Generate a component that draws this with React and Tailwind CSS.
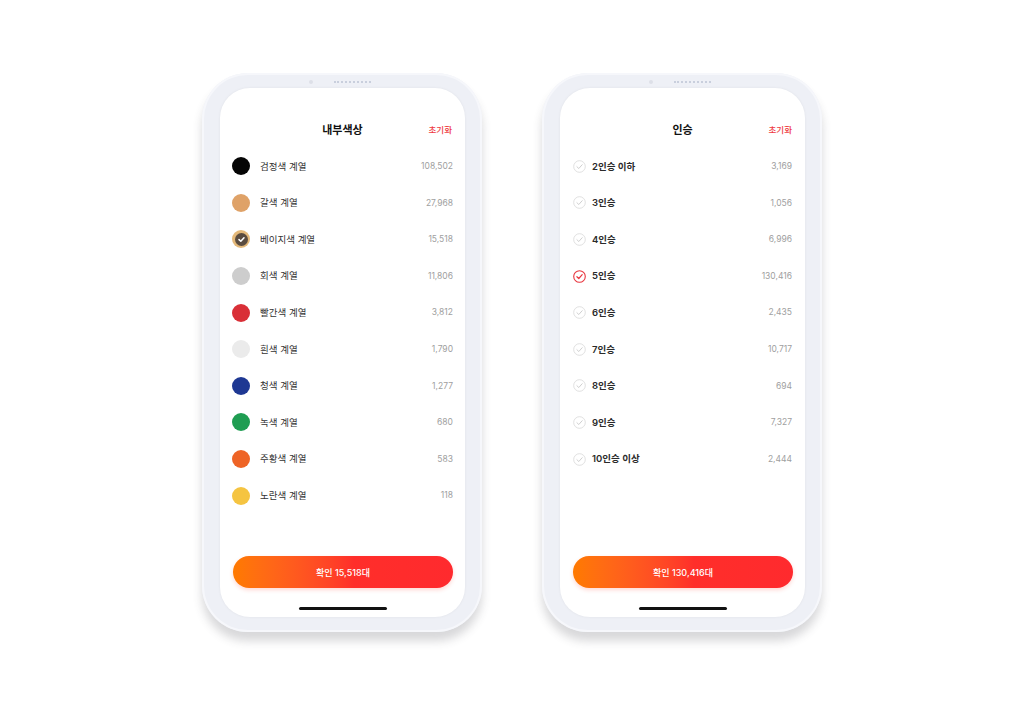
import React from 'react';

const font = { fontFamily: 'Inter, "Noto Sans CJK KR", "Noto Sans", sans-serif' };

const colors = [
    { name: '검정색 계열', count: '108,502', cls: 'bg-[#050505]' },
    { name: '갈색 계열', count: '27,968', cls: 'bg-[#dfa268]' },
    { name: '베이지색 계열', count: '15,518', cls: 'bg-[#e4b97a]', selected: true },
    { name: '회색 계열', count: '11,806', cls: 'bg-[#cdcdcd]' },
    { name: '빨간색 계열', count: '3,812', cls: 'bg-[#d92f37]' },
    { name: '흰색 계열', count: '1,790', cls: 'bg-[#ebebeb]' },
    { name: '청색 계열', count: '1,277', cls: 'bg-[#1e3893]' },
    { name: '녹색 계열', count: '680', cls: 'bg-[#1f9d52]' },
    { name: '주황색 계열', count: '583', cls: 'bg-[#ee6426]' },
    { name: '노란색 계열', count: '118', cls: 'bg-[#f5c441]' },
];

const seats = [
    { name: '2인승 이하', count: '3,169' },
    { name: '3인승', count: '1,056' },
    { name: '4인승', count: '6,996' },
    { name: '5인승', count: '130,416', selected: true },
    { name: '6인승', count: '2,435' },
    { name: '7인승', count: '10,717' },
    { name: '8인승', count: '694' },
    { name: '9인승', count: '7,327' },
    { name: '10인승 이상', count: '2,444' },
];

const CheckCircle = ({ active }) => (
    <svg width="13" height="13" viewBox="0 0 13 13" className="shrink-0">
        <circle cx="6.5" cy="6.5" r="5.8" fill="none" stroke={active ? '#e8363f' : '#dcdcdc'} strokeWidth={active ? 1.1 : 0.9} />
        <path d="M3.9 6.7 L5.8 8.5 L9.2 4.7" fill="none" stroke={active ? '#e8363f' : '#c9c9c9'} strokeWidth={active ? 1.2 : 0.9} strokeLinecap="round" strokeLinejoin="round" />
    </svg>
);

const Phone = ({ title, total, children }) => (
    <div className="relative w-[280px] h-[559px] rounded-[46px] bg-[#eef0f6] pl-[18px] pr-[17px] py-[15px] shadow-[0_9px_10px_rgba(60,60,70,0.2),inset_0_0_0_2px_#f6f7fb]">
        <div className="absolute top-[7px] left-[107px] w-[4px] h-[4px] rounded-full bg-[#dde0e8]" />
        <div className="absolute top-[8px] left-[132px] w-[37px] h-[2px] border-t-2 border-dotted border-[#c9cfdd]" />
        <div className="flex flex-col h-full rounded-[30px] bg-white shadow-[0_0_3px_rgba(0,0,0,0.06)] pt-[35px] pb-[7px]">
            <div className="relative h-[14px] flex items-center justify-center">
                <span className="text-[11px] font-bold text-[#111] leading-none">{title}</span>
                <span className="absolute right-[13px] text-[8.5px] font-medium text-[#ee3a42] leading-none">초기화</span>
            </div>
            <div className="mt-[11px] flex flex-col">{children}</div>
            <div className="flex-1" />
            <div className="mx-[12px] ml-[13px] h-[32px] rounded-full bg-linear-to-r from-[#ff7a00] via-[#ff2e2a] via-55% to-[#ff2a2e] flex items-center justify-center shadow-[0_2px_4px_rgba(255,60,40,0.2)]">
                <span className="text-[9px] font-medium text-white leading-none">확인 {total}대</span>
            </div>
            <div className="mt-[19px] mx-auto w-[88px] h-[3px] rounded-full bg-[#111]" />
        </div>
    </div>
);

const App = () => {
    return (
        <div className="w-[1024px] h-[703px] bg-white flex justify-center gap-[60px] pt-[73px]" style={font}>
            <Phone title="내부색상" total="15,518">
                {colors.map((c) => (
                    <div key={c.name} className="h-[36.6px] flex items-center pl-[12px] pr-[12px]">
                        {c.selected ? (
                            <div className={`w-[18px] h-[18px] rounded-full ${c.cls} flex items-center justify-center`}>
                                <div className="w-[13px] h-[13px] rounded-full bg-[#5a4c40] flex items-center justify-center">
                                    <svg width="9" height="9" viewBox="0 0 9 9">
                                        <path d="M2 4.6 L3.8 6.3 L7 2.8" fill="none" stroke="#fff" strokeWidth="1.5" strokeLinecap="round" strokeLinejoin="round" />
                                    </svg>
                                </div>
                            </div>
                        ) : (
                            <div className={`w-[18px] h-[18px] rounded-full ${c.cls}`} />
                        )}
                        <span className="ml-[10px] text-[9.5px] text-[#333] leading-none">{c.name}</span>
                        <span className="ml-auto text-[8.5px] text-[#a0a0a0] leading-none">{c.count}</span>
                    </div>
                ))}
            </Phone>
            <Phone title="인승" total="130,416">
                {seats.map((s) => (
                    <div key={s.name} className="h-[36.6px] flex items-center pl-[13px] pr-[13px]">
                        <CheckCircle active={s.selected} />
                        <span className="ml-[6px] text-[9.5px] font-semibold text-[#2a2a2a] leading-none">{s.name}</span>
                        <span className="ml-auto text-[8.5px] text-[#a0a0a0] leading-none">{s.count}</span>
                    </div>
                ))}
            </Phone>
        </div>
    );
};

export default App;
